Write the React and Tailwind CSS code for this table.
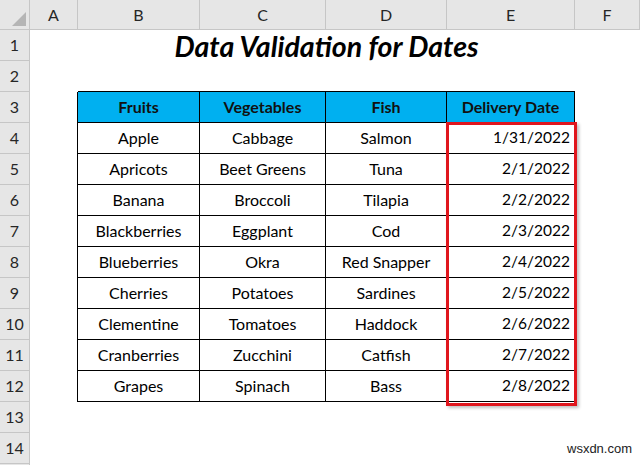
import React from "react";

const rows = [
  ["Apple", "Cabbage", "Salmon", "1/31/2022"],
  ["Apricots", "Beet Greens", "Tuna", "2/1/2022"],
  ["Banana", "Broccoli", "Tilapia", "2/2/2022"],
  ["Blackberries", "Eggplant", "Cod", "2/3/2022"],
  ["Blueberries", "Okra", "Red Snapper", "2/4/2022"],
  ["Cherries", "Potatoes", "Sardines", "2/5/2022"],
  ["Clementine", "Tomatoes", "Haddock", "2/6/2022"],
  ["Cranberries", "Zucchini", "Catfish", "2/7/2022"],
  ["Grapes", "Spinach", "Bass", "2/8/2022"],
];

const colHead = "flex items-center justify-center bg-[#e6e6e6] border-r border-b border-[#c6c6c6] text-[16px] text-[#262626]";
const rowHead = "flex items-center justify-center bg-[#e6e6e6] border-r border-b border-[#c6c6c6] text-[16px] text-[#262626]";

export default function App() {
  return (
    <div
      className="relative w-[640px] h-[465px] overflow-hidden bg-white"
      style={{ fontFamily: "Lato, 'Noto Sans', sans-serif" }}
    >
      <div className="grid grid-cols-[30px_48px_122px_126px_121px_128px_1fr] grid-rows-[30px_repeat(15,31px)]">
        {/* column headers */}
        <div className="relative bg-[#e6e6e6] border-r border-b border-[#c6c6c6]">
          <div className="absolute right-[3px] bottom-[3px] w-0 h-0 border-l-[14px] border-l-transparent border-b-[14px] border-b-[#b5b5b5]" />
        </div>
        {["A", "B", "C", "D", "E", "F"].map((c) => (
          <div key={c} className={colHead}>
            {c}
          </div>
        ))}

        {/* row 1: title */}
        <div className={rowHead}>1</div>
        <div />
        <div className="col-span-4 flex items-center justify-center pt-[1px] text-[28.5px] font-bold italic text-black">
          Data Validation for Dates
        </div>
        <div />

        {/* row 2 */}
        <div className={rowHead}>2</div>
        <div />
        <div className="border-b border-black" />
        <div className="border-b border-black" />
        <div className="border-b border-black" />
        <div className="border-b border-black" />
        <div />

        {/* row 3: table header */}
        <div className={rowHead}>3</div>
        <div className="border-r border-black" />
        {["Fruits", "Vegetables", "Fish", "Delivery Date"].map((h) => (
          <div
            key={h}
            className="flex items-center justify-center bg-[#00b0f0] border-r border-b border-black text-[16px] font-bold text-[#111]"
          >
            {h}
          </div>
        ))}
        <div />

        {rows.map((r, i) => (
          <React.Fragment key={i}>
            <div className={rowHead}>{i + 4}</div>
            <div className="border-r border-black" />
            {r.slice(0, 3).map((v, j) => (
              <div
                key={j}
                className="flex items-center justify-center border-r border-b border-black text-[16px] text-black"
              >
                {v}
              </div>
            ))}
            <div className="flex items-center justify-end pr-[4px] border-r border-b border-black text-[15.5px] text-black">
              {r[3]}
            </div>
            <div />
          </React.Fragment>
        ))}

        {[13, 14].map((n) => (
          <React.Fragment key={n}>
            <div className={rowHead}>{n}</div>
            <div className="col-span-6" />
          </React.Fragment>
        ))}
        <div className="bg-[#e6e6e6] border-r border-[#c6c6c6]" />
        <div className="col-span-6" />
      </div>

      {/* selection highlight */}
      <div className="absolute left-[446px] top-[122px] w-[131px] h-[284px] border-[3px] border-[#e0161d] shadow-[2px_2px_3px_rgba(0,0,0,0.25)]" />

      <div
        className="absolute left-[567px] top-[439px] text-[13px] text-[#222]"
        style={{ fontFamily: "'Liberation Sans', sans-serif" }}
      >
        wsxdn.com
      </div>
    </div>
  );
}
